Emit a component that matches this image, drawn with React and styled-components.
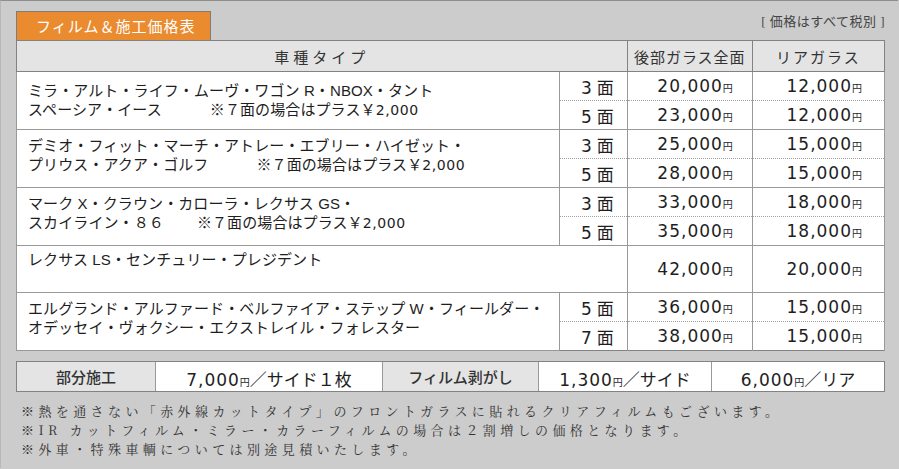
import React from 'react';
import styled, { createGlobalStyle } from 'styled-components';

const GlobalStyle = createGlobalStyle`
  html, body { margin: 0; padding: 0; background: #cccccc; }
  body { font-family: "Liberation Sans", "Noto Sans CJK JP", sans-serif; color: #1e1e1e; }
`;

const rows = [
  {
    lines: ['ミラ・アルト・ライフ・ムーヴ・ワゴン R・NBOX・タント', 'スペーシア・イース'],
    gap: 48,
    pt: 9,
    prices: [['3', '20,000', '12,000'], ['5', '23,000', '12,000']],
  },
  {
    lines: ['デミオ・フィット・マーチ・アトレー・エブリー・ハイゼット・', 'プリウス・アクア・ゴルフ'],
    gap: 48,
    prices: [['3', '25,000', '15,000'], ['5', '28,000', '15,000']],
  },
  {
    lines: ['マーク X・クラウン・カローラ・レクサス GS・', 'スカイライン・８６'],
    gap: 33,
    prices: [['3', '33,000', '18,000'], ['5', '35,000', '18,000']],
  },
];

const lastRow = {
  lines: ['エルグランド・アルファード・ベルファイア・ステップ W・フィールダー・', 'オデッセイ・ヴォクシー・エクストレイル・フォレスター'],
  prices: [['5', '36,000', '15,000'], ['7', '38,000', '15,000']],
};

const Price = ({ value }) => (
  <>
    <Num>{value}</Num>
    <Yen>円</Yen>
  </>
);

export default function App() {
  return (
    <Page>
      <GlobalStyle />
      <TopBar>
        <Tab>フィルム＆施工価格表</Tab>
        <TaxNote>[ 価格はすべて税別 ]</TaxNote>
      </TopBar>

      <PriceTable>
        <colgroup>
          <col style={{ width: 542 }} />
          <col style={{ width: 68 }} />
          <col style={{ width: 125 }} />
          <col style={{ width: 132 }} />
        </colgroup>
        <thead>
          <tr>
            <HeadCell colSpan={2} $spacing={4}>車種タイプ</HeadCell>
            <HeadCell $spacing={1}>後部ガラス全面</HeadCell>
            <HeadCell $spacing={2}>リアガラス</HeadCell>
          </tr>
        </thead>
        <tbody>
          {[...rows, lastRow].map((row, i) => (
            <React.Fragment key={i}>
              <SubRow>
                <TypeCell rowSpan={2} $pt={row.pt}>
                  <div>{row.lines[0]}</div>
                  <div>
                    {row.lines[1]}
                    {row.gap && (
                      <Extra $gap={row.gap}>※７面の場合はプラス￥<ExtraNum>2,000</ExtraNum></Extra>
                    )}
                  </div>
                </TypeCell>
                <FaceCell $top><Num>{row.prices[0][0]}</Num> 面</FaceCell>
                <PriceCell $top $pad={19}><Price value={row.prices[0][1]} /></PriceCell>
                <PriceCell $top $pad={22}><Price value={row.prices[0][2]} /></PriceCell>
              </SubRow>
              <SubRow>
                <FaceCell><Num>{row.prices[1][0]}</Num> 面</FaceCell>
                <PriceCell $pad={19}><Price value={row.prices[1][1]} /></PriceCell>
                <PriceCell $pad={22}><Price value={row.prices[1][2]} /></PriceCell>
              </SubRow>
              {i === 2 && (
                <SingleRow>
                  <TypeCell colSpan={2} $pt={4}>レクサス LS・センチュリー・プレジデント</TypeCell>
                  <PriceCell $pad={19} $single><Price value="42,000" /></PriceCell>
                  <PriceCell $pad={22} $single><Price value="20,000" /></PriceCell>
                </SingleRow>
              )}
            </React.Fragment>
          ))}
        </tbody>
      </PriceTable>

      <ExtraTable>
        <ExtraLabel $w={138}>部分施工</ExtraLabel>
        <ExtraValue $w={227}><Price value="7,000" />／サイド１枚</ExtraValue>
        <ExtraLabel $w={155}>フィルム剥がし</ExtraLabel>
        <ExtraValue $w={173}><Price value="1,300" />／サイド</ExtraValue>
        <ExtraValue $w={174}><Price value="6,000" />／リア</ExtraValue>
      </ExtraTable>

      <Notes>
        <p>※熱を通さない「赤外線カットタイプ」のフロントガラスに貼れるクリアフィルムもございます。</p>
        <p>※IR カットフィルム・ミラー・カラーフィルムの場合は２割増しの価格となります。</p>
        <p>※外車・特殊車輌については別途見積いたします。</p>
      </Notes>
    </Page>
  );
}

const Page = styled.div`
  width: 898px;
  height: 468px;
  border-top: 1px solid #8e8e8e;
  border-left: 1px solid #b8b8b8;
  background: #cccccc;
  padding: 10px 14px 0 15px;
  box-sizing: border-box;
`;

const TopBar = styled.div`
  display: flex;
  justify-content: space-between;
  align-items: flex-end;
  width: 869px;
`;

const Tab = styled.div`
  width: 193px;
  height: 28px;
  box-sizing: content-box;
  border: 1px solid #7d7d7d;
  border-bottom: none;
  background: #ea8b30;
  color: #fff;
  font-family: "Noto Sans CJK JP", sans-serif;
  font-size: 15px;
  letter-spacing: 1px;
  line-height: 28px;
  text-indent: 19px;
`;

const TaxNote = styled.div`
  font-family: "Liberation Serif", "Noto Sans CJK JP", serif;
  font-size: 13px;
  color: #444;
  margin-bottom: 10px;
  letter-spacing: 0.5px;
`;

const PriceTable = styled.table`
  width: 869px;
  table-layout: fixed;
  border-collapse: collapse;
  border: 1px solid #828282;
  background: #fff;
  font-size: 15px;
`;

const HeadCell = styled.th`
  height: 30px;
  padding: 0;
  background: #e4e4e4;
  font-weight: normal;
  font-size: 15px;
  letter-spacing: ${p => p.$spacing}px;
  color: #333;
  border: 1px solid #828282;
  text-align: center;
`;

const SubRow = styled.tr`
  height: 29px;
`;

const SingleRow = styled.tr`
  height: 47px;
`;

const TypeCell = styled.td`
  vertical-align: top;
  padding: ${p => p.$pt ?? 6}px 0 0 11px;
  line-height: 19px;
  font-size: 15px;
  letter-spacing: 0.1px;
  border: 1px solid #999;
  white-space: nowrap;
`;

const Extra = styled.span`
  margin-left: ${p => p.$gap}px;
`;

const ExtraNum = styled.span`
  font-family: "DejaVu Sans", sans-serif;
  font-size: 14px;
  letter-spacing: 0.6px;
`;

const FaceCell = styled.td`
  padding: 0 13px 0 0;
  text-align: right;
  font-family: "Noto Sans CJK JP", sans-serif;
  font-size: 17px;
  border-left: 1px solid #999;
  border-right: 1px solid #999;
  border-top: ${p => (p.$top ? '1px solid #999' : '1px dotted #a0a0a0')};
`;

const PriceCell = styled.td`
  padding: 0 ${p => p.$pad}px 0 0;
  text-align: right;
  border-left: 1px solid #999;
  border-right: 1px solid #999;
  border-top: ${p => (p.$top || p.$single ? '1px solid #999' : '1px dotted #a0a0a0')};
`;

const Num = styled.span`
  font-family: "DejaVu Sans", sans-serif;
  font-size: 17px;
  letter-spacing: 1px;
`;

const Yen = styled.span`
  font-family: "Noto Sans CJK JP", sans-serif;
  font-size: 10px;
  letter-spacing: 0;
`;

const ExtraTable = styled.div`
  display: flex;
  width: 869px;
  height: 31px;
  margin-top: 10px;
  border: 1px solid #828282;
  box-sizing: border-box;
`;

const ExtraLabel = styled.div`
  width: ${p => p.$w}px;
  background: #e4e4e4;
  border-right: 1px solid #999;
  display: flex;
  align-items: center;
  justify-content: center;
  font-family: "Noto Sans CJK JP", sans-serif;
  font-size: 15px;
  font-weight: 500;
  color: #333;
`;

const ExtraValue = styled.div`
  width: ${p => p.$w}px;
  background: #fff;
  border-right: 1px solid #999;
  display: flex;
  align-items: baseline;
  justify-content: center;
  padding-top: 4px;
  box-sizing: border-box;
  font-family: "Noto Sans CJK JP", sans-serif;
  font-size: 17px;
  &:last-child { border-right: none; flex: 1; }
`;

const Notes = styled.div`
  margin-top: 9px;
  padding-left: 5px;
  font-family: "Noto Serif CJK JP", "Liberation Serif", serif;
  font-size: 13px;
  letter-spacing: 4.4px;
  color: #333;
  line-height: 19px;
  p { margin: 0; white-space: nowrap; }
`;
